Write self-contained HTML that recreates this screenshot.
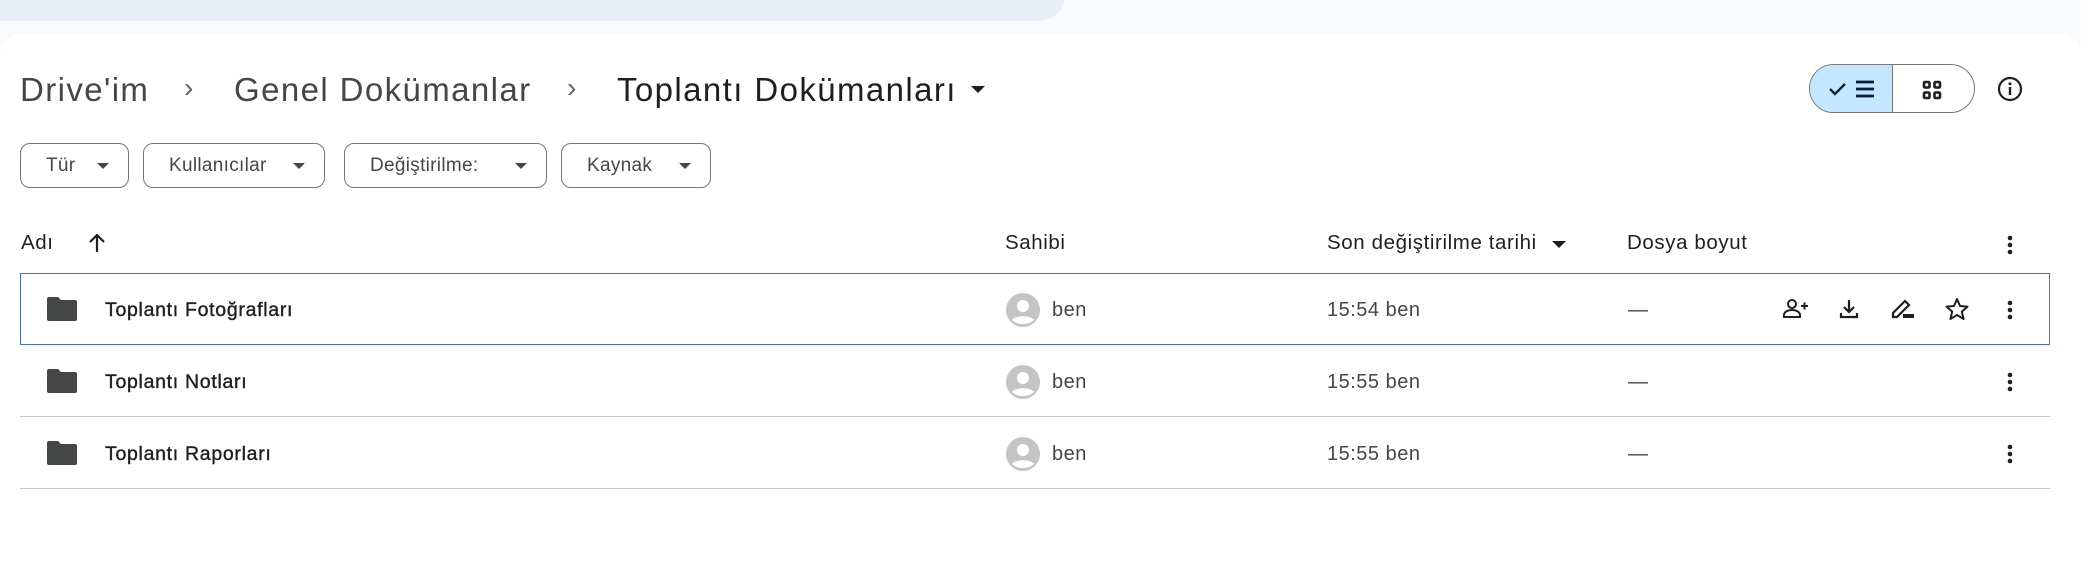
<!DOCTYPE html>
<html><head><meta charset="utf-8"><style>
*{margin:0;padding:0;box-sizing:border-box}
body{width:2081px;height:556px;background:#f8fafd;position:relative;overflow:hidden;font-family:"Liberation Sans",sans-serif;color:#1f1f1f}
.abs{position:absolute}
.search{left:-30px;top:-40px;width:1096px;height:61px;background:#e9eef6;border-radius:0 0 28px 0}
.panel{left:0;top:33px;width:2081px;height:540px;background:#fff;border-radius:22px 22px 0 0}
.bc{top:70px;font-size:33px;color:#444746;white-space:nowrap;line-height:40px;letter-spacing:1.4px}
.chev{top:72px;font-size:28px;color:#5f6368}
.chip{top:143px;height:45px;border:1.3px solid #747775;border-radius:10px;font-size:19px;color:#444746;line-height:43px;padding-left:25px;letter-spacing:.3px}
.tri{position:absolute;width:0;height:0;border-left:6px solid transparent;border-right:6px solid transparent;border-top:6px solid #444746}
.hd{top:231px;font-size:20.5px;color:#1f1f1f;line-height:24px;letter-spacing:.6px}
.row{left:20px;width:2030px;height:72px}
.sep{height:1.3px;background:#c7c7c7;left:20px;width:2030px}
.nm{font-size:19.5px;color:#1f1f1f;left:105px;line-height:24px;letter-spacing:.7px;-webkit-text-stroke:.4px #1f1f1f}
.tx{font-size:20px;color:#444746;line-height:24px;letter-spacing:.5px}
</style></head><body>
<div class="abs search"></div>
<div class="abs panel"></div>

<div class="abs bc" style="left:20px">Drive'im</div>
<div class="abs chev" style="left:184px">›</div>
<div class="abs bc" style="left:234px">Genel Dokümanlar</div>
<div class="abs chev" style="left:567px">›</div>
<div class="abs bc" style="left:617px;color:#1f1f1f">Toplantı Dokümanları</div>
<div class="tri" style="left:971px;top:86px;border-width:7px 7px 0 7px;border-top-color:#1f1f1f"></div>

<div class="abs" style="left:1809px;top:64px;width:166px;height:49px;border:1.3px solid #747775;border-radius:25px;overflow:hidden">
<div class="abs" style="left:0;top:0;width:83px;height:49px;background:#c2e7ff;border-right:1.3px solid #747775"></div>
<svg class="abs" style="left:17px;top:12px" width="50" height="24" viewBox="0 0 50 24"><path d="M3 12l5 5 10-10" stroke="#0b1f33" stroke-width="2.3" fill="none"/><path d="M29 5h18M29 12h18M29 19h18" stroke="#0b1f33" stroke-width="2.8"/></svg>
<svg class="abs" style="left:112px;top:15px" width="20" height="20" viewBox="0 0 20 20"><g fill="none" stroke="#1f1f1f" stroke-width="2.6"><rect x="2" y="2" width="5.5" height="5.5" rx="1"/><rect x="12.5" y="2" width="5.5" height="5.5" rx="1"/><rect x="2" y="12.5" width="5.5" height="5.5" rx="1"/><rect x="12.5" y="12.5" width="5.5" height="5.5" rx="1"/></g></svg>
</div>
<svg class="abs" style="left:1997px;top:76px" width="26" height="26" viewBox="0 0 26 26"><circle cx="13" cy="13" r="11" fill="none" stroke="#1f1f1f" stroke-width="2.2"/><rect x="11.8" y="11" width="2.4" height="8" fill="#1f1f1f"/><circle cx="13" cy="7.7" r="1.5" fill="#1f1f1f"/></svg>

<div class="abs chip" style="left:20px;width:109px">Tür<div class="tri" style="left:76px;top:19px"></div></div>
<div class="abs chip" style="left:143px;width:182px">Kullanıcılar<div class="tri" style="left:149px;top:19px"></div></div>
<div class="abs chip" style="left:344px;width:203px">Değiştirilme:<div class="tri" style="left:170px;top:19px"></div></div>
<div class="abs chip" style="left:561px;width:150px">Kaynak<div class="tri" style="left:117px;top:19px"></div></div>

<div class="abs hd" style="left:21px">Adı</div>
<svg class="abs" style="left:86px;top:231px" width="22" height="24" viewBox="0 0 22 24"><path d="M11 21V4M4 11l7-7 7 7" stroke="#1f1f1f" stroke-width="2.2" fill="none"/></svg>
<div class="abs hd" style="left:1005px">Sahibi</div>
<div class="abs hd" style="left:1327px">Son değiştirilme tarihi</div>
<div class="tri" style="left:1552px;top:241px;border-width:7px 7px 0 7px;border-top-color:#1f1f1f"></div>
<div class="abs hd" style="left:1627px">Dosya boyut</div>
<svg class="abs" style="left:2004px;top:232px" width="12" height="26" viewBox="0 0 12 26"><g fill="#1f1f1f"><circle cx="6" cy="6" r="2.3"/><circle cx="6" cy="13" r="2.3"/><circle cx="6" cy="20" r="2.3"/></g></svg>

<div class="abs row" style="top:273px;border:1.4px solid #4a6bd6"></div>
<div class="abs sep" style="top:416px"></div>
<div class="abs sep" style="top:488px"></div>

<svg class="abs" style="left:46px;top:296px" width="32" height="26" viewBox="0 0 32 26"><path d="M3 1h9l3 3h14a2 2 0 0 1 2 2v17a2 2 0 0 1-2 2H3a2 2 0 0 1-2-2V3a2 2 0 0 1 2-2z" fill="#444746"/></svg>
<svg class="abs" style="left:46px;top:368px" width="32" height="26" viewBox="0 0 32 26"><path d="M3 1h9l3 3h14a2 2 0 0 1 2 2v17a2 2 0 0 1-2 2H3a2 2 0 0 1-2-2V3a2 2 0 0 1 2-2z" fill="#444746"/></svg>
<svg class="abs" style="left:46px;top:440px" width="32" height="26" viewBox="0 0 32 26"><path d="M3 1h9l3 3h14a2 2 0 0 1 2 2v17a2 2 0 0 1-2 2H3a2 2 0 0 1-2-2V3a2 2 0 0 1 2-2z" fill="#444746"/></svg>
<div class="abs nm" style="top:298px">Toplantı Fotoğrafları</div>
<div class="abs nm" style="top:370px">Toplantı Notları</div>
<div class="abs nm" style="top:442px">Toplantı Raporları</div>

<svg class="abs" style="left:1006px;top:293px" width="34" height="34" viewBox="0 0 34 34"><circle cx="17" cy="17" r="17" fill="#c4c4c4"/><circle cx="17" cy="13" r="6" fill="#fff"/><path d="M6 27c3-5 19-5 22 0c-3 3-7 4-11 4s-8-1-11-4z" fill="#fff"/></svg>
<svg class="abs" style="left:1006px;top:365px" width="34" height="34" viewBox="0 0 34 34"><circle cx="17" cy="17" r="17" fill="#c4c4c4"/><circle cx="17" cy="13" r="6" fill="#fff"/><path d="M6 27c3-5 19-5 22 0c-3 3-7 4-11 4s-8-1-11-4z" fill="#fff"/></svg>
<svg class="abs" style="left:1006px;top:437px" width="34" height="34" viewBox="0 0 34 34"><circle cx="17" cy="17" r="17" fill="#c4c4c4"/><circle cx="17" cy="13" r="6" fill="#fff"/><path d="M6 27c3-5 19-5 22 0c-3 3-7 4-11 4s-8-1-11-4z" fill="#fff"/></svg>
<div class="abs tx" style="left:1052px;top:298px">ben</div>
<div class="abs tx" style="left:1052px;top:370px">ben</div>
<div class="abs tx" style="left:1052px;top:442px">ben</div>
<div class="abs tx" style="left:1327px;top:298px">15:54 ben</div>
<div class="abs tx" style="left:1327px;top:370px">15:55 ben</div>
<div class="abs tx" style="left:1327px;top:442px">15:55 ben</div>
<div class="abs tx" style="left:1628px;top:298px">—</div>
<div class="abs tx" style="left:1628px;top:370px">—</div>
<div class="abs tx" style="left:1628px;top:442px">—</div>

<svg class="abs" style="left:1782px;top:297px" width="28" height="24" viewBox="0 0 28 24"><g fill="none" stroke="#1f1f1f" stroke-width="2"><circle cx="10" cy="7" r="4"/><path d="M2 20v-2c0-3 4-5 8-5s8 2 8 5v2z"/><path d="M19 9h7M22.5 5.5v7"/></g></svg>
<svg class="abs" style="left:1837px;top:297px" width="24" height="24" viewBox="0 0 24 24"><g fill="none" stroke="#1f1f1f" stroke-width="2.2"><path d="M12 3v12M7 10l5 5 5-5M4 16v4h16v-4"/></g></svg>
<svg class="abs" style="left:1890px;top:297px" width="26" height="24" viewBox="0 0 26 24"><g fill="none" stroke="#1f1f1f" stroke-width="2.2"><path d="M3 20v-4L15 4l4 4L7 20z"/></g><rect x="13" y="17" width="11" height="4" fill="#1f1f1f"/></svg>
<svg class="abs" style="left:1944px;top:296px" width="26" height="26" viewBox="0 0 26 26"><path d="M13 3l3 7 7.5.6-5.7 5 1.8 7.4L13 19l-6.6 4 1.8-7.4-5.7-5L10 10z" fill="none" stroke="#1f1f1f" stroke-width="2" stroke-linejoin="round"/></svg>
<svg class="abs" style="left:2004px;top:297px" width="12" height="26" viewBox="0 0 12 26"><g fill="#1f1f1f"><circle cx="6" cy="6" r="2.3"/><circle cx="6" cy="13" r="2.3"/><circle cx="6" cy="20" r="2.3"/></g></svg>
<svg class="abs" style="left:2004px;top:369px" width="12" height="26" viewBox="0 0 12 26"><g fill="#1f1f1f"><circle cx="6" cy="6" r="2.3"/><circle cx="6" cy="13" r="2.3"/><circle cx="6" cy="20" r="2.3"/></g></svg>
<svg class="abs" style="left:2004px;top:441px" width="12" height="26" viewBox="0 0 12 26"><g fill="#1f1f1f"><circle cx="6" cy="6" r="2.3"/><circle cx="6" cy="13" r="2.3"/><circle cx="6" cy="20" r="2.3"/></g></svg>
</body></html>
